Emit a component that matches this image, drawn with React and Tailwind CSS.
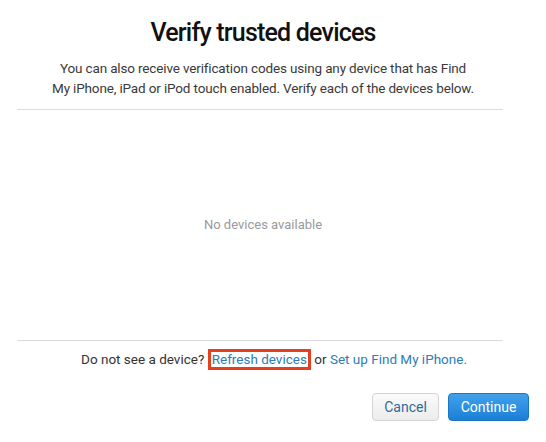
import React from "react";

const App = () => {
  return (
    <div
      className="w-[546px] h-[442px] bg-white overflow-hidden"
      style={{ fontFamily: "Roboto, 'Noto Sans', sans-serif" }}
    >
      <div className="pt-[17px] pr-[20px] text-center">
        <h1 className="text-[25px] leading-[32px] font-medium text-[#111] tracking-[-0.8px]">
          Verify trusted devices
        </h1>
        <p className="mt-[9px] whitespace-nowrap text-[13.5px] leading-[20px] text-[#3a3a3a] tracking-[-0.15px]">
          You can also receive verification codes using any device that has Find
          <br />
          My iPhone, iPad or iPod touch enabled. Verify each of the devices below.
        </p>
      </div>

      <div className="ml-[17px] w-[486px] mt-[11px] border-t border-[#dcdcdc] h-[231px] flex items-center justify-center">
        <span className="pl-[6px] text-[13px] text-[#9a9a9a]">No devices available</span>
      </div>

      <div className="ml-[17px] w-[486px] border-t border-[#dcdcdc]">
        <p className="pt-[8px] pl-[28px] text-center text-[13.5px] leading-[20px] text-[#333]">
          Do not see a device?{" "}
          <span className="inline-block border-[3px] border-[#e2401f] px-[1px] leading-[15px] text-[#2e7db5]">
            Refresh devices
          </span>{" "}
          or <span className="text-[#2e7db5]">Set up Find My iPhone.</span>
        </p>
      </div>

      <div className="flex justify-end gap-[9px] pr-[17px] mt-[23px]">
        <button className="h-[28px] w-[67px] rounded-[4px] border border-[#d4d4d4] bg-gradient-to-b from-[#fbfbfb] to-[#ececec] text-[14px] text-[#2f6b9c]">
          Cancel
        </button>
        <button className="h-[28px] w-[81px] rounded-[4px] border border-[#1976c8] bg-gradient-to-b from-[#42a1ec] to-[#1a7fd4] text-[14px] text-white">
          Continue
        </button>
      </div>
    </div>
  );
};

export default App;
